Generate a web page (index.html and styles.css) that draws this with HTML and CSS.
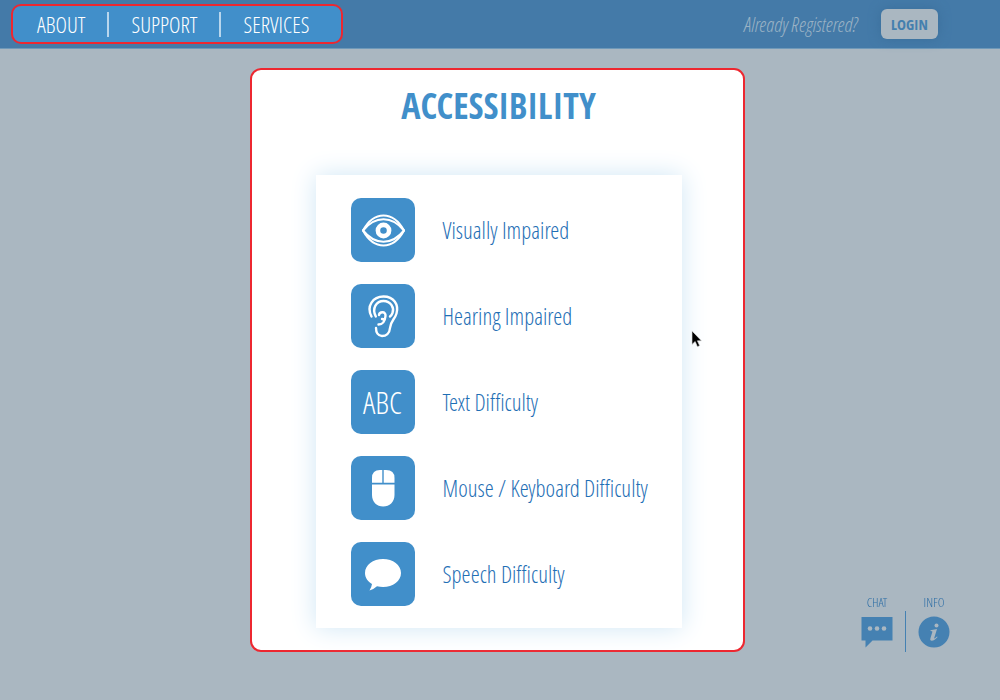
FILE: index.html
```html
<!DOCTYPE html>
<html lang="en">
<head>
<meta charset="utf-8">
<meta name="viewport" content="width=device-width, initial-scale=1">
<title>Accessibility</title>
<link rel="stylesheet" href="styles.css">
</head>
<body>
<header class="topbar">
  <nav class="menu">
    <a class="menu-link" href="#about">ABOUT</a>
    <a class="menu-link" href="#support">SUPPORT</a>
    <a class="menu-link" href="#services">SERVICES</a>
  </nav>
  <div class="account">
    <span class="registered">Already Registered?</span>
    <button class="login" type="button">LOGIN</button>
  </div>
</header>

<main class="stage">
  <section class="dialog" role="dialog" aria-labelledby="dialog-title">
    <h1 class="title" id="dialog-title">ACCESSIBILITY</h1>
    <div class="options">
      <button class="option" type="button">
        <span class="tile">
          <svg class="glyph" viewBox="0 0 64 64" fill="none" stroke="#fff" stroke-width="2.1" stroke-linejoin="round" stroke-linecap="round">
            <path d="M12 32.500C24 17.500 41 17.500 53 32.500C41 47.500 24 47.500 12 32.500Z"/>
            <path d="M12 32.500C23 12.500 42 12.500 53 32.500M12 32.500C23 52.500 42 52.500 53 32.500"/>
            <circle cx="32.500" cy="32.500" r="5.600" stroke-width="4.600"/>
          </svg>
        </span>
        <span class="label">Visually Impaired</span>
      </button>
      <button class="option" type="button">
        <span class="tile">
          <svg class="glyph" viewBox="0 0 64 64" fill="none" stroke="#fff" stroke-width="2.400" stroke-linecap="round" stroke-linejoin="round">
            <path d="M20.500 32.500C15 22 22 12.500 32.500 12.500C43 12.500 48 21 45.500 29.500C44 35 39.500 37 39 44C38.600 49.500 35 52 31 52C27 52 25 48.500 25 44"/>
            <path d="M24.800 32.500C20.500 24 25.500 17 32.500 17C40 17 43.500 24 41.500 29C40.800 30.800 40 31.700 39 32.500"/>
            <path d="M28 31C28.500 27.500 35 27 34.500 32C34 37 32 40.500 27.500 40.500M33.500 35.500L31 35"/>
          </svg>
        </span>
        <span class="label">Hearing Impaired</span>
      </button>
      <button class="option" type="button">
        <span class="tile tile-text" aria-hidden="true">ABC</span>
        <span class="label">Text Difficulty</span>
      </button>
      <button class="option" type="button">
        <span class="tile">
          <svg class="glyph" viewBox="0 0 64 64" fill="#fff">
            <path d="M31.300 14V26.800H21V22Q21 14 29 14ZM32.700 14H35Q43.500 14 43.500 22V26.800H32.700ZM21 28.500H43.500V39C43.500 46 38.500 50.500 32.200 50.500S21 46 21 39Z"/>
          </svg>
        </span>
        <span class="label">Mouse / Keyboard Difficulty</span>
      </button>
      <button class="option" type="button">
        <span class="tile">
          <svg class="glyph" viewBox="0 0 64 64" fill="#fff">
            <path d="M32 17C42 17 50 23 50 31S42 45 32 45Q29 45 26 44.200Q23 47 18.500 48.500Q20.500 45.500 21 42C17 39.500 14 36 14 31C14 23 22 17 32 17Z"/>
          </svg>
        </span>
        <span class="label">Speech Difficulty</span>
      </button>
    </div>
    <svg class="pointer" viewBox="0 0 12 20" aria-hidden="true"><path d="M1 1V16L4.500 12.800L7 18.500L9.500 17.400L7 12H11.500Z" stroke="#ddd" stroke-width=".7"/></svg>
  </section>
</main>

<aside class="help">
  <a class="help-link" href="#chat">
    <span>CHAT</span>
    <svg class="help-icon" viewBox="0 0 32 32"><path d="M.500 1H31.500V24.500H11.500L4.500 31.500V24.500H.500Z" fill="#4581b2"/><g fill="#aab7c1"><circle cx="9" cy="12.500" r="2.300"/><circle cx="16" cy="12.500" r="2.300"/><circle cx="23" cy="12.500" r="2.300"/></g></svg>
  </a>
  <span class="help-divider"></span>
  <a class="help-link" href="#info">
    <span>INFO</span>
    <svg class="help-icon" viewBox="0 0 32 32"><circle cx="16" cy="16" r="15.500" fill="#4581b2"/><g fill="#aab7c1"><circle cx="18.500" cy="9.500" r="2"/><path d="M12.500 14.200L19 13L16.200 22Q15.900 23.300 19 20.500L19.600 21.100Q16.500 24.800 13.700 24.800Q11.600 24.800 12.500 22L14.400 15.700Q14.600 14.900 12.500 14.900Z"/></g></svg>
  </a>
</aside>
</body>
</html>
```
FILE: styles.css
```css
* { box-sizing: border-box; }

body {
  margin: 0;
  min-height: 100vh;
  background: #aab7c1;
  color: #2f6fa6;
  font-family: "Open Sans Condensed Light", "Open Sans Condensed", "Liberation Sans", sans-serif;
}

a { color: inherit; text-decoration: none; }

button { font-family: inherit; border: 0; cursor: pointer; }

.topbar {
  display: flex;
  align-items: center;
  justify-content: space-between;
  height: 49px;
  padding: 0 62px 0 11px;
  background: #447aa8;
  border-bottom: 1px solid #6f99b9;
}

.menu {
  display: flex;
  align-items: center;
  height: 40px;
  padding: 0 10px 0 2px;
  background: #418fca;
  border: 2px solid #ed2730;
  border-radius: 10px;
}

.menu-link {
  padding: 0 22px;
  color: #fff;
  font-size: 22px;
  line-height: 25px;
}

.menu-link + .menu-link { border-left: 2px solid #b8d6ed; }

.account { display: flex; align-items: center; gap: 24px; }

.registered { color: #9ab2c5; font-size: 20px; font-style: italic; }

.login {
  height: 30px;
  padding: 0 10px;
  background: #aab7c1;
  border-radius: 6px;
  box-shadow: 0 0 12px #3b6f9b;
  color: #447fae;
  font-family: "Open Sans Condensed", "Liberation Sans", sans-serif;
  font-size: 15px;
  font-weight: bold;
}

.stage { display: flex; justify-content: center; padding: 19px 16px 48px 10px; }

.dialog {
  position: relative;
  width: 100%;
  max-width: 495px;
  padding: 12px 61px 22px 64px;
  background: #fff;
  border: 2px solid #ed2730;
  border-radius: 11px;
}

.title {
  margin: 0 0 45px;
  color: #418fca;
  font-family: "Open Sans Condensed", "Liberation Sans", sans-serif;
  font-size: 36px;
  line-height: 48px;
  text-align: center;
}

.options {
  display: flex;
  flex-direction: column;
  gap: 22px;
  padding: 23px 35px 22px;
  background: #fff;
  box-shadow: 0 0 24px #cfe6f5;
}

.option {
  display: flex;
  align-items: center;
  gap: 28px;
  padding: 0;
  background: none;
  text-align: left;
}

.tile {
  display: grid;
  flex: none;
  place-items: center;
  width: 64px;
  height: 64px;
  background: #418fca;
  border-radius: 10px;
}

.tile-text { color: #fff; font-size: 31px; line-height: 40px; }

.glyph { width: 64px; height: 64px; }

.label { color: #1f6fb5; font-size: 23px; white-space: nowrap; }

.pointer { position: absolute; top: 260px; right: 41px; width: 11px; height: 18px; }

.help { position: fixed; right: 38px; bottom: 48px; display: flex; align-items: flex-end; }

.help-link {
  display: flex;
  flex-direction: column;
  align-items: center;
  gap: 6px;
  padding: 0 12px 4px;
  font-size: 13px;
  line-height: 15px;
}

.help-divider { width: 1px; height: 41px; background: #4581b2; }

.help-icon { width: 32px; height: 32px; }
```
